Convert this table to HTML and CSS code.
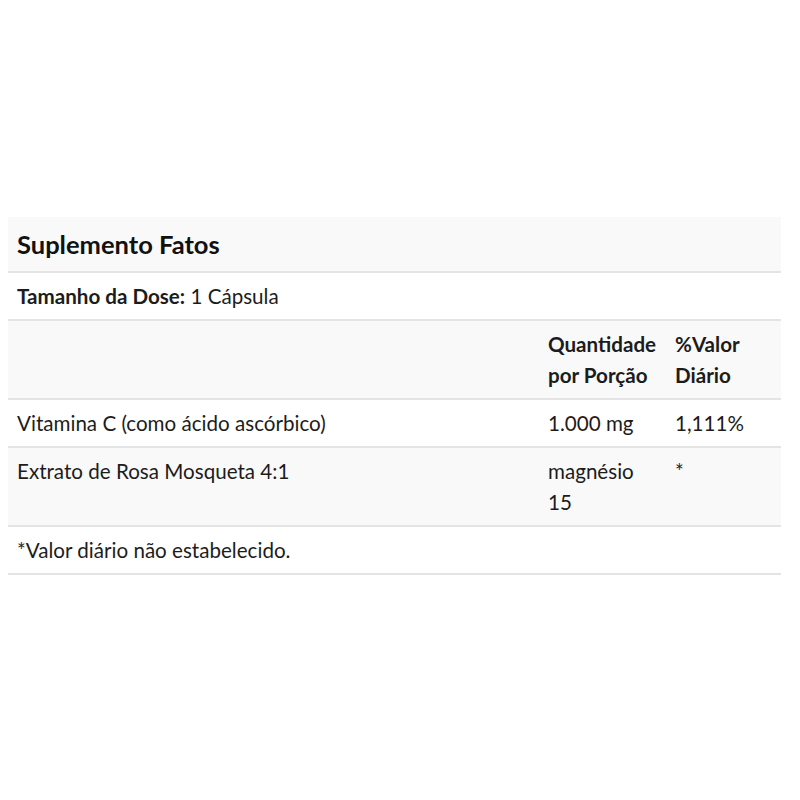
FILE: index.html
```html
<!DOCTYPE html>
<html lang="pt">
<head>
<meta charset="utf-8">
<link rel="stylesheet" href="styles.css">
</head>
<body>
<div class="page">
  <table class="facts">
    <colgroup>
      <col class="c-name">
      <col class="c-amt">
      <col class="c-dv">
    </colgroup>
    <tr class="title grey"><td colspan="3">Suplemento Fatos</td></tr>
    <tr><td colspan="3"><b>Tamanho da Dose:</b> 1 Cápsula</td></tr>
    <tr class="grey head"><td></td><td>Quantidade por Porção</td><td>%Valor Diário</td></tr>
    <tr><td>Vitamina C (como ácido ascórbico)</td><td>1.000 mg</td><td>1,111%</td></tr>
    <tr class="grey"><td>Extrato de Rosa Mosqueta 4:1</td><td>magnésio 15</td><td>*</td></tr>
    <tr><td colspan="3">*Valor diário não estabelecido.</td></tr>
  </table>
</div>
</body>
</html>
```
FILE: styles.css
```css
html, body {
  margin: 0;
  padding: 0;
  background: #fff;
}
.page {
  padding: 217px 19px 0 8px;
}
.facts {
  width: 773px;
  border-collapse: collapse;
  table-layout: fixed;
  font-family: Lato, "Open Sans", sans-serif;
  font-size: 20.6px;
  line-height: 31px;
  color: #1c1c1c;
}
.c-amt { width: 127px; }
.c-dv { width: 115px; }
.facts td {
  padding: 7.5px 8px 7.5px 9px;
  border-bottom: 2px solid #e4e4e4;
  vertical-align: top;
  text-align: left;
}
.facts b { font-weight: 700; }
.grey td { background: #f9f9f9; }
.title td {
  font-size: 25.5px;
  font-weight: 700;
  line-height: 39px;
  color: #111;
}
.head td {
  font-weight: 700;
}
```
